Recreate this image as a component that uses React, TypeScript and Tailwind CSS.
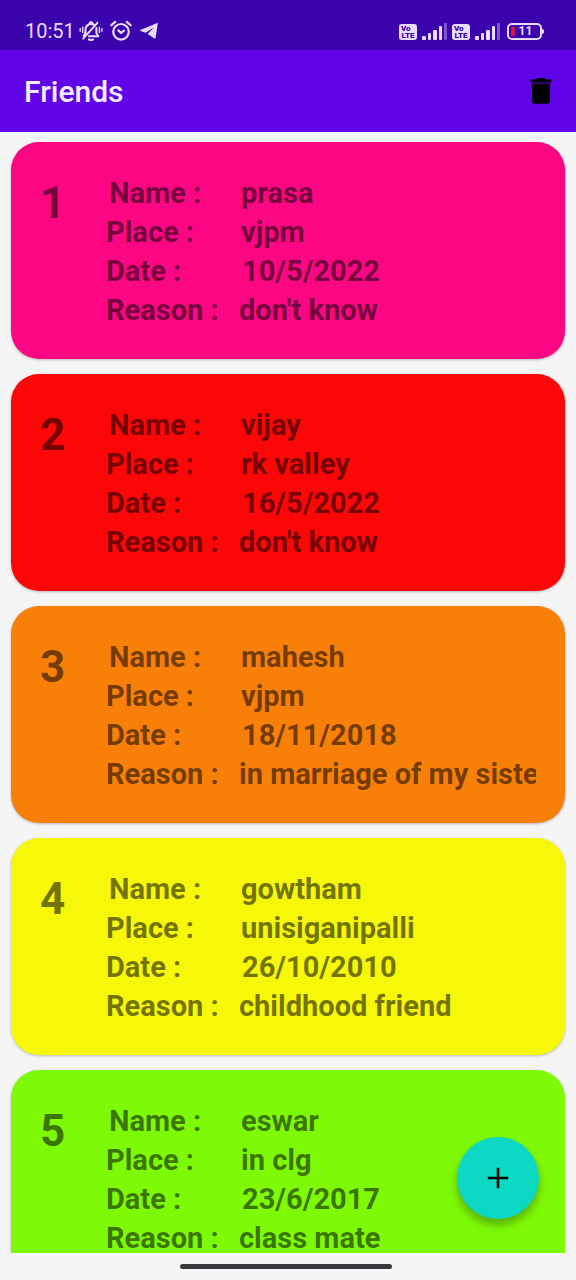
type Friend = {
  name: string;
  place: string;
  date: string;
  reason: string;
  color: string;
};

const friends: Friend[] = [
  { name: "prasa", place: "vjpm", date: "10/5/2022", reason: "don't know", color: "bg-[#fb0683]" },
  { name: "vijay", place: "rk valley", date: "16/5/2022", reason: "don't know", color: "bg-[#fb0707]" },
  { name: "mahesh", place: "vjpm", date: "18/11/2018", reason: "in marriage of my sister", color: "bg-[#f88008]" },
  { name: "gowtham", place: "unisiganipalli", date: "26/10/2010", reason: "childhood friend", color: "bg-[#f7f809]" },
  { name: "eswar", place: "in clg", date: "23/6/2017", reason: "class mate", color: "bg-[#7ffa06]" },
];

function MutedBell() {
  return (
    <svg width="24" height="22" viewBox="0 0 24 22" fill="none" stroke="currentColor" strokeWidth="2" strokeLinecap="round" strokeLinejoin="round" aria-hidden="true">
      <path d="M6.5 12V9.5a5.5 5.5 0 0 1 8.6-4.6M17.4 8v5.2l2 3H10" />
      <path d="M6.5 12.5 4.6 16.2M4.2 18.6 18.4 2.8" />
      <path d="M9.8 19.2h4.6l-2.3 1.2Z" fill="currentColor" stroke="none" />
      <path d="M10.6 3.2Q12 1 13.4 3.2M10 19.4q2 1.4 4 0" />
      <path d="M3.7 7.2v5.2M1.2 8.6v2.6M20.4 7.2v5.2M22.9 8.6v2.6" strokeWidth="1.4" />
    </svg>
  );
}

function AlarmClock() {
  return (
    <svg width="22" height="22" viewBox="0 0 22 22" fill="none" stroke="currentColor" strokeWidth="2.2" strokeLinecap="round" strokeLinejoin="round" aria-hidden="true">
      <circle cx="11" cy="11.8" r="7.8" />
      <path d="M1.4 5.2 5.2 1.9M20.6 5.2l-3.8-3.3M8.4 10.4l2.6 2.6 3-2.4" />
    </svg>
  );
}

function Telegram() {
  return (
    <svg width="18" height="16" viewBox="0 0 18 16" fill="currentColor" aria-hidden="true">
      <path d="M17.8.5 15.6 14.7c-.2.9-.9 1.1-1.6.6L7.6 11l6.3-6.5L5.6 9.8.6 8c-.7-.3-.7-.8.2-1.2L16.7.2c.8-.3 1.3-.2 1.1.3Z" />
    </svg>
  );
}

function Sim() {
  return (
    <div className="flex items-end gap-[5px]">
      <div className="flex h-4 w-[18px] flex-col items-center justify-center rounded-[3px] bg-[#e9dcfa] text-[8px] leading-[7px] font-black text-[#3a03ae]">
        <span className="w-[14px]">Vo</span>
        <span>LTE</span>
      </div>
      <svg width="25" height="17" viewBox="0 0 25 17" fill="currentColor" aria-hidden="true">
        <rect x="0" y="13" width="4" height="4" rx="1" />
        <rect x="6" y="10" width="3" height="7" rx="1" />
        <rect x="11" y="7" width="4" height="10" rx="1" />
        <rect x="17" y="3" width="3" height="14" rx="1" />
        <rect x="22" y="0" width="3" height="17" rx="1" opacity=".4" />
      </svg>
    </div>
  );
}

function StatusBar() {
  return (
    <div className="flex h-[50px] shrink-0 items-center justify-between bg-[#3a03ae] pt-3 pr-8 pl-[25px] text-[#e9dcfa]">
      <div className="flex items-center">
        <span className="pr-1 text-[20px] leading-5">10:51</span>
        <MutedBell />
        <span className="pr-2 pl-[7px]"><AlarmClock /></span>
        <Telegram />
      </div>
      <div className="flex items-center gap-[5px]">
        <Sim />
        <Sim />
        <div className="flex items-center pl-0.5">
          <div className="flex h-[17px] w-[35px] items-center rounded-[5px] border-2 border-current pl-0.5 text-[12px] leading-3 font-bold">
            <span className="h-[9px] w-1 rounded-[1px] bg-[#d3153f]" />
            <span className="flex-1 pr-1 text-center">11</span>
          </div>
          <span className="h-[5px] w-0.5 rounded-r bg-current" />
        </div>
      </div>
    </div>
  );
}

function FriendCard({ friend, index }: { friend: Friend; index: number }) {
  return (
    <li className={`flex shrink-0 rounded-[28px] pt-8 pr-[29px] pb-[29px] pl-[29px] text-black/55 shadow-[0_1px_3px_rgba(0,0,0,0.25)] ${friend.color}`}>
      <span className="w-[66px] shrink-0 pt-1 text-[44px] leading-[50px] font-bold">{index}</span>
      <dl className="grid min-w-0 flex-1 grid-cols-[133px_1fr] text-[29px] leading-[39px] font-bold">
        <dt className="pl-[3px]">Name :</dt>
        <dd className="overflow-hidden pl-0.5 whitespace-nowrap">{friend.name}</dd>
        <dt>Place :</dt>
        <dd className="overflow-hidden pl-0.5 whitespace-nowrap">{friend.place}</dd>
        <dt>Date :</dt>
        <dd className="overflow-hidden pl-[3px] whitespace-nowrap">{friend.date}</dd>
        <dt>Reason :</dt>
        <dd className="overflow-hidden whitespace-nowrap">{friend.reason}</dd>
      </dl>
    </li>
  );
}

export default function App() {
  return (
    <div className="relative flex h-dvh flex-col bg-[#f5f5f6] font-['Roboto',sans-serif]">
      <StatusBar />
      <header className="flex h-[82px] shrink-0 items-center justify-between bg-[#6005e8] pt-0.5 pr-[21px] pl-6">
        <h1 className="text-[30px] leading-9 font-medium text-[#f3ebff]">Friends</h1>
        <button type="button" aria-label="Delete all" className="text-black">
          <svg width="28" height="28" viewBox="0 0 28 28" fill="currentColor" aria-hidden="true">
            <path d="M5 5.5h18v17.2a3 3 0 0 1-3 3H8a3 3 0 0 1-3-3ZM3.6 1.4H9L10.4 0h7.2L19 1.4h5.4v3H3.6Z" />
          </svg>
        </button>
      </header>
      <main className="min-h-0 flex-1 overflow-y-auto [scrollbar-width:none]">
        <ul className="flex flex-col gap-[15px] px-[11px] pt-[10px] pb-4">
          {friends.map((friend, i) => (
            <FriendCard key={friend.name} friend={friend} index={i + 1} />
          ))}
        </ul>
      </main>
      <button
        type="button"
        aria-label="Add friend"
        className="absolute right-[37px] bottom-[61px] flex size-[82px] items-center justify-center rounded-full bg-[#0cd8c4] text-black shadow-[0_6px_10px_rgba(0,0,0,0.3)]"
      >
        <svg width="22" height="22" viewBox="0 0 22 22" fill="none" stroke="currentColor" strokeWidth="2.6" aria-hidden="true">
          <path d="M11 .8v20.4M.8 11h20.4" />
        </svg>
      </button>
      <footer className="flex h-[27px] shrink-0 items-center justify-center pr-1">
        <div className="h-[5px] w-[37%] rounded-full bg-[#39373b]" />
      </footer>
    </div>
  );
}
